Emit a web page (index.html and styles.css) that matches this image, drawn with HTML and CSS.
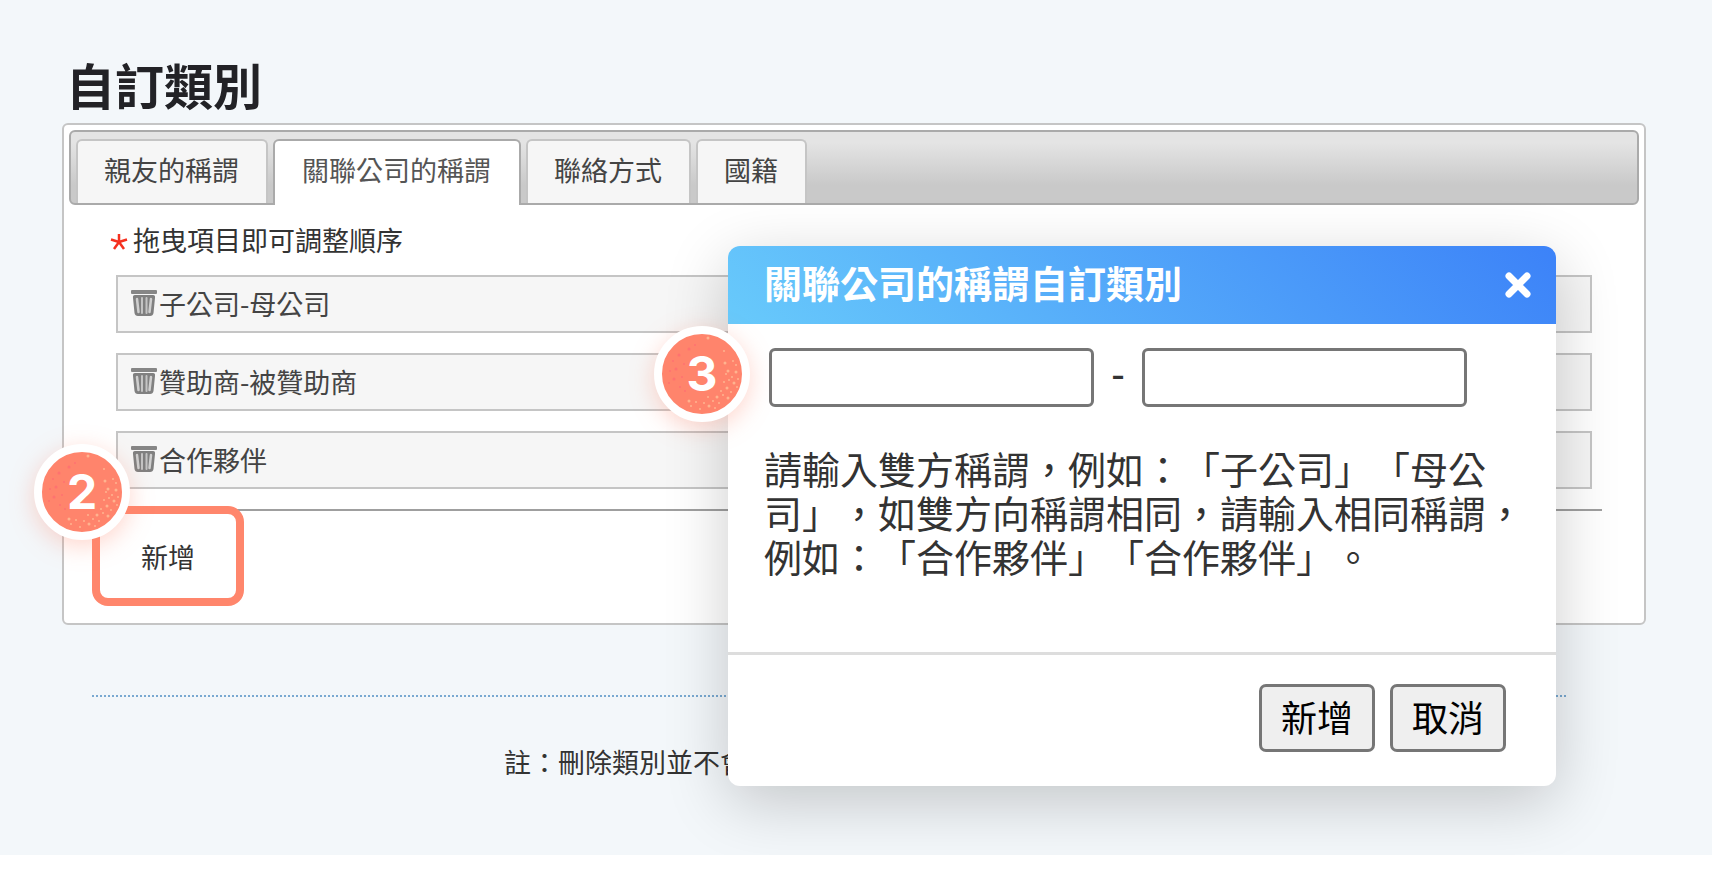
FILE: index.html
```html
<!DOCTYPE html>
<html lang="zh-Hant">
<head>
    <meta charset="UTF-8">
    <meta name="viewport" content="width=device-width, initial-scale=1.0">
    <title>自訂類別</title>
    <link rel="stylesheet" href="styles.css">
</head>
<body>

<!-- shared icons -->
<svg class="defs" aria-hidden="true">
    <symbol id="icon-trash" viewBox="0 0 26 28">
        <rect x="0" y="1" width="26" height="4" rx="1" fill="#868686"/>
        <path d="M4 6H22Q24.500 6 24 9L22.500 24Q22 27 19 27H7Q4 27 3.500 24L2 9Q1.500 6 4 6Z" fill="#808080"/>
        <path d="M6 10L7.500 23M18.500 23L20 10" stroke="#cfcfcf" stroke-width="2.500" stroke-linecap="round"/>
        <path d="M11 9V24M15.500 9V24" stroke="#c4c4c4" stroke-width="2" stroke-linecap="round"/>
    </symbol>
    <symbol id="badge-dots" viewBox="0 0 80 80">
        <g fill="#ffb38f">
            <circle cx="71" cy="27" r="1"/><circle cx="74" cy="31" r="1"/><circle cx="63" cy="29" r="1.500"/>
            <circle cx="66" cy="37" r="1.500"/><circle cx="74" cy="38" r="1.500"/><circle cx="70" cy="43" r="1"/>
            <circle cx="64" cy="40" r="1"/><circle cx="67" cy="46" r="1"/><circle cx="76" cy="45" r="1"/>
            <circle cx="72" cy="49" r="1.500"/><circle cx="62" cy="48" r="1"/><circle cx="75" cy="53" r="1"/>
            <circle cx="65" cy="54" r="1.500"/><circle cx="69" cy="58" r="1"/><circle cx="59" cy="57" r="1"/>
            <circle cx="61" cy="61" r="1"/><circle cx="66" cy="64" r="1.500"/><circle cx="55" cy="63" r="1.500"/>
            <circle cx="57" cy="69" r="1"/><circle cx="51" cy="67" r="1"/><circle cx="46" cy="63" r="1"/>
            <circle cx="47" cy="72" r="1.500"/><circle cx="42" cy="69" r="1"/><circle cx="38" cy="75" r="1"/>
            <circle cx="53" cy="74" r="1"/><circle cx="34" cy="68" r="1"/><circle cx="27" cy="67" r="1.500"/>
            <circle cx="29" cy="72" r="1"/><circle cx="62" cy="17" r="1"/><circle cx="46" cy="4" r="1.500"/>
        </g>
        <g fill="#ff7270">
            <circle cx="11" cy="27" r="1"/><circle cx="17" cy="21" r="1.500"/><circle cx="22" cy="30" r="1"/>
            <circle cx="8" cy="37" r="1"/><circle cx="14" cy="35" r="1.500"/><circle cx="12" cy="45" r="1.500"/>
            <circle cx="20" cy="43" r="1"/><circle cx="27" cy="15" r="1.500"/><circle cx="18" cy="53" r="1"/>
            <circle cx="23" cy="57" r="1"/><circle cx="33" cy="11" r="1"/><circle cx="7" cy="49" r="1"/>
        </g>
    </symbol>
</svg>

<div class="page">
    <h1>自訂類別</h1>

    <div class="panel">
        <div class="tabs" role="tablist">
            <button class="tab" type="button" role="tab">親友的稱謂</button>
            <button class="tab active" type="button" role="tab" aria-selected="true">關聯公司的稱謂</button>
            <button class="tab" type="button" role="tab">聯絡方式</button>
            <button class="tab" type="button" role="tab">國籍</button>
        </div>

        <div class="tab-content">
            <p class="hint">
                <svg class="star" viewBox="0 0 18 18" aria-hidden="true"><path d="M9 9V1M9 9L1 6.500M9 9L17 6.500M9 9L4 16M9 9L14 16"/></svg>
                拖曳項目即可調整順序
            </p>
            <ul class="items">
                <li><button type="button" aria-label="刪除"><svg><use href="#icon-trash"/></svg></button>子公司-母公司</li>
                <li><button type="button" aria-label="刪除"><svg><use href="#icon-trash"/></svg></button>贊助商-被贊助商</li>
                <li><button type="button" aria-label="刪除"><svg><use href="#icon-trash"/></svg></button>合作夥伴</li>
            </ul>
            <div class="add-row">
                <div class="highlight">
                    <button class="add" type="button">新增</button>
                    <span class="badge"><svg><use href="#badge-dots"/></svg><b>2</b></span>
                </div>
            </div>
        </div>
    </div>

    <p class="note">註：刪除類別並不會</p>

    <div class="dialog" role="dialog" aria-labelledby="dialog-title">
        <div class="dialog-header">
            <h2 id="dialog-title">關聯公司的稱謂自訂類別</h2>
            <button class="close" type="button" aria-label="關閉">
                <svg viewBox="0 0 26 26"><path d="M4 4L22 22M22 4L4 22"/></svg>
            </button>
        </div>
        <div class="dialog-body">
            <div class="fields">
                <input type="text" aria-label="己方稱謂">
                <span>-</span>
                <input type="text" aria-label="對方稱謂">
            </div>
            <p>請輸入雙方稱謂，例如：「子公司」「母公司」，如雙方向稱謂相同，請輸入相同稱謂，例如：「合作夥伴」「合作夥伴」。</p>
        </div>
        <div class="dialog-footer">
            <button type="button">新增</button>
            <button type="button">取消</button>
        </div>
        <span class="badge"><svg><use href="#badge-dots"/></svg><b>3</b></span>
    </div>
</div>

</body>
</html>
```
FILE: styles.css
```css
* {
    box-sizing: border-box;
}

body {
    margin: 0;
    background-color: #fff;
    color: #333;
    font-family: "Noto Sans CJK TC", sans-serif;
    font-size: 27px;
    line-height: 40px;
    text-spacing-trim: space-all;
}

h1, h2, p, ul {
    margin: 0;
    padding: 0;
}

button, input {
    margin: 0;
    font: inherit;
}

.defs {
    position: absolute;
    width: 0;
    height: 0;
}

.page {
    position: relative;
    padding: 48px 66px 73px 62px;
    background-color: #f3f7fa;
}

h1 {
    padding: 0 0 3px 4px;
    color: #222226;
    font-size: 49px;
    line-height: 72px;
}

.panel {
    padding: 5px;
    border: 2px solid #c5c5c5;
    border-radius: 6px;
    background-color: #fff;
}

/* Tabs */
.tabs {
    display: flex;
    gap: 5px;
    height: 75px;
    padding: 7px 5px 0;
    border: 2px solid #aaa;
    border-radius: 6px;
    background: linear-gradient(#e4e4e4 15%, #c9c9c9 75%);
}

.tab {
    height: 64px;
    padding: 0 27px 4px 26px;
    border: 2px solid #c5c5c5;
    border-bottom: 0;
    border-radius: 6px 6px 0 0;
    background-color: #f6f6f6;
    color: #444;
}

.tab.active {
    height: 66px;
    padding: 0 28px 6px 27px;
    border-color: #aaa;
    background-color: #fff;
    color: #555;
}

.tab-content {
    padding: 15px 37px 12px;
}

.hint {
    display: flex;
    align-items: center;
    gap: 5px;
    padding-left: 4px;
}

.star {
    width: 18px;
    height: 18px;
    margin-top: 4px;
    fill: none;
    stroke: #f5301f;
    stroke-width: 2.5;
}

/* Sortable items */
.items {
    display: flex;
    flex-direction: column;
    gap: 20px;
    padding: 15px 10px 20px;
    list-style: none;
}

.items li {
    display: flex;
    align-items: center;
    gap: 2px;
    height: 58px;
    padding-left: 13px;
    border: 2px solid #c5c5c5;
    background-color: #f6f6f6;
    color: #444;
}

.items button {
    display: flex;
    padding: 0 0 2px;
    border: 0;
    background: none;
}

.items svg {
    width: 26px;
    height: 28px;
}

.add-row {
    border-top: 2px solid #9f9f9f;
}

.highlight {
    position: relative;
    width: 152px;
    height: 100px;
    margin: -5px 0 0 -14px;
    border: 8px solid #ff866c;
    border-radius: 16px;
}

.add {
    width: 100%;
    height: 100%;
    padding: 2px 0 0;
    border: 0;
    background: none;
    color: #333;
}

/* Step badges */
.badge {
    position: absolute;
    display: flex;
    align-items: center;
    justify-content: center;
    width: 96px;
    height: 96px;
    border: 8px solid #fff;
    border-radius: 50%;
    background-color: #ff846c;
    box-shadow: 0 6px 24px rgba(255, 134, 108, 0.35);
    color: #fff;
    font-family: Inter, sans-serif;
    font-size: 48px;
}

.badge svg {
    position: absolute;
    width: 80px;
    height: 80px;
}

.badge b {
    position: relative;
}

.highlight .badge {
    top: -70px;
    left: -66px;
}

.dialog .badge {
    top: 80px;
    left: -74px;
}

.note {
    margin: 70px 80px 0 30px;
    padding: 45px 0 0 412px;
    border-top: 2px dotted #79a9d1;
}

/* Dialog */
.dialog {
    position: absolute;
    top: 246px;
    right: 156px;
    width: 828px;
    border-radius: 12px;
    background-color: #fff;
    box-shadow: 0 16px 64px rgba(0, 0, 0, 0.2);
    font-size: 38px;
}

.dialog-header {
    display: flex;
    align-items: center;
    justify-content: space-between;
    height: 78px;
    padding: 0 25px 0 36px;
    border-radius: 12px 12px 0 0;
    background: linear-gradient(45deg, #68cafb, #3c82f8);
    color: #fff;
}

.dialog-header h2 {
    padding-bottom: 6px;
    font-size: 38px;
    line-height: 56px;
}

.close {
    display: flex;
    padding: 0;
    border: 0;
    background: none;
}

.close svg {
    width: 26px;
    height: 26px;
    stroke: #fff;
    stroke-width: 7;
    stroke-linecap: round;
}

.dialog-body {
    padding: 24px 28px 74px 36px;
}

.fields {
    display: flex;
    padding-left: 5px;
}

.fields input {
    width: 325px;
    height: 59px;
    padding: 0 12px;
    border: 3px solid #767676;
    border-radius: 6px;
    background-color: #fff;
}

.fields span {
    width: 48px;
    font-weight: 500;
    line-height: 48px;
    text-align: center;
}

.dialog-body p {
    margin-top: 39px;
    line-height: 44px;
}

.dialog-footer {
    display: flex;
    justify-content: flex-end;
    gap: 15px;
    padding: 29px 50px 34px;
    border-top: 3px solid #ddd;
}

.dialog-footer button {
    height: 68px;
    width: 116px;
    padding: 0 0 4px;
    border: 3px solid #767676;
    border-radius: 7px;
    background-color: #efefef;
    color: #000;
    font-size: 36px;
}
```
